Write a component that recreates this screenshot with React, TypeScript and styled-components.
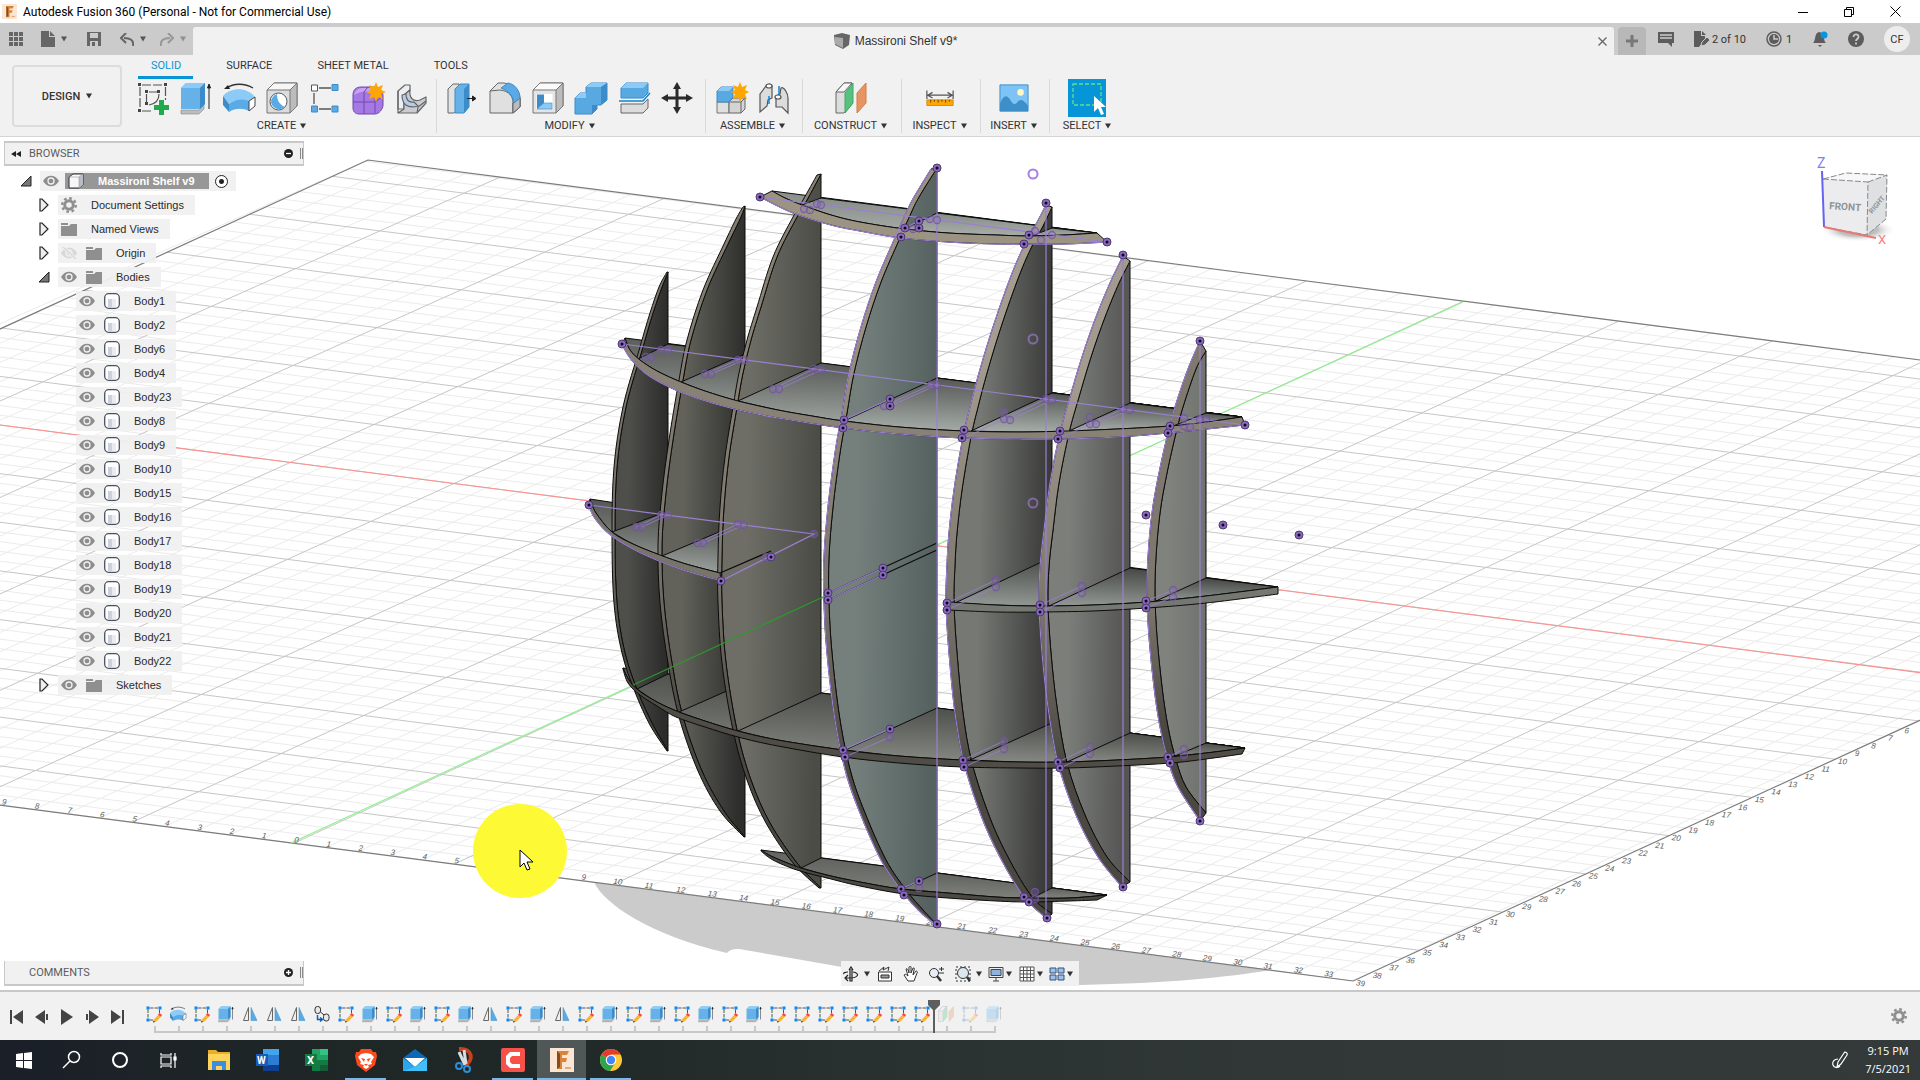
import React from "react";
import styled, { createGlobalStyle } from "styled-components";

const ui = 'Roboto, "Liberation Sans", sans-serif';
const arial = '"Liberation Sans", Arial, sans-serif';
const segoe = '"Open Sans", "Noto Sans", sans-serif';

const GlobalStyle = createGlobalStyle`
  * { box-sizing: border-box; }
  body { margin: 0; font-family: ${ui}; font-size: 11px; color: #333; overflow: hidden; }
  button { border: 0; padding: 0; margin: 0; background: none; font: inherit; color: inherit; cursor: pointer; }
  svg { display: block; flex: none; }
  ul, ol { list-style: none; margin: 0; padding: 0; }
`;

const Page = styled.div`
  display: flex;
  flex-direction: column;
  height: 100vh;
  background: #fff;
`;

/* ---------- window title ---------- */
const TitleBar = styled.header`
  display: flex;
  align-items: center;
  height: 23px;
  padding: 0 2px;
  font: 12px/20px ${ui};
  color: #000;
`;
const TitleText = styled.span`
  flex: 1;
  padding-left: 6px;
`;
const WindowButton = styled.button`
  display: flex;
  justify-content: center;
  align-items: center;
  width: 46px;
  height: 20px;
`;

/* ---------- application bar ---------- */
const AppBar = styled.div`
  display: flex;
  align-items: flex-end;
  height: 32px;
  background: #cbcbcb;
  color: #333;
`;
const QuickAccess = styled.div`
  display: flex;
  align-items: center;
  width: 193px;
  height: 32px;
  padding-left: 6px;
`;
const QuickButton = styled.button<{ $w: number; $faded?: boolean }>`
  display: flex;
  align-items: center;
  justify-content: center;
  gap: 6px;
  width: ${(p) => p.$w}px;
  height: 28px;
  opacity: ${(p) => (p.$faded ? 0.5 : 1)};
`;
const DocumentTab = styled.div`
  display: flex;
  align-items: center;
  flex: 1;
  height: 28px;
  padding-right: 4px;
  background: #f1f1f1;
  border-radius: 3px 3px 0 0;
  font: 12px/16px ${arial};
`;
const DocumentName = styled.div`
  display: flex;
  flex: 1;
  align-items: center;
  justify-content: center;
  gap: 4px;
  padding-left: 4px;
`;
const SmallButton = styled.button`
  display: flex;
  align-items: center;
  justify-content: center;
  width: 16px;
  height: 16px;
`;
const NewTab = styled.button`
  display: flex;
  align-items: center;
  justify-content: center;
  width: 28px;
  height: 28px;
  margin: 0 4px;
  background: #b8b8b8;
  border-radius: 4px 4px 0 0;
`;
const StatusArea = styled.div`
  display: flex;
  align-items: center;
  width: 270px;
  height: 32px;
  padding: 0 10px 0 8px;
  justify-content: space-between;
`;
const StatusButton = styled.button<{ $gap?: number }>`
  display: flex;
  align-items: center;
  gap: ${(p) => p.$gap ?? 4}px;
`;
const Avatar = styled.button`
  width: 26px;
  height: 26px;
  border-radius: 50%;
  background: #ededed;
`;

/* ---------- ribbon ---------- */
const Ribbon = styled.div`
  display: flex;
  height: 82px;
  background: #f1f1f1;
  border-bottom: 1px solid #d4d4d4;
`;
const Workspace = styled.button`
  display: flex;
  align-items: center;
  justify-content: center;
  gap: 6px;
  width: 110px;
  height: 62px;
  margin: 10px 8px 0 12px;
  border: 2px solid #dcdcdc;
  border-radius: 4px;
  font-weight: 500;
`;
const RibbonBody = styled.div`
  display: flex;
  flex-direction: column;
`;
const TabStrip = styled.nav`
  display: flex;
  gap: 20px;
  padding-left: 8px;
`;
const RibbonTab = styled.button<{ $active?: boolean }>`
  height: 24px;
  padding: 1px 12px 0 13px;
  line-height: 20px;
  color: ${(p) => (p.$active ? "#0696d7" : "#333")};
  border-bottom: 3px solid ${(p) => (p.$active ? "#0696d7" : "transparent")};
`;
const GroupRow = styled.div`
  display: flex;
`;
const Group = styled.section<{ $w: number }>`
  display: flex;
  flex-direction: column;
  align-items: center;
  width: ${(p) => p.$w}px;
  height: 54px;
  padding-right: 3px;
  border-right: 1px solid #d9d9d9;
  &:last-child { border-right: 0; }
`;
const Tools = styled.div`
  display: flex;
  gap: 11px;
  height: 41px;
`;
const Tool = styled.button<{ $selected?: boolean }>`
  display: flex;
  align-items: center;
  justify-content: center;
  width: ${(p) => (p.$selected ? 38 : 32)}px;
  height: 38px;
  background: ${(p) => (p.$selected ? "#0696d7" : "none")};
`;
const GroupLabel = styled.button`
  display: flex;
  align-items: center;
  gap: 4px;
  line-height: 14px;
  white-space: nowrap;
`;

/* ---------- canvas ---------- */
const Canvas = styled.main`
  position: relative;
  flex: 1;
  min-height: 0;
  overflow: hidden;
  background: #fff;
`;
const Scene = styled.svg`
  width: 100%;
  height: 100%;
`;
const BrowserPanel = styled.aside`
  position: absolute;
  left: 4px;
  top: 4px;
  width: 300px;
`;
const PanelBar = styled.div<{ $open?: boolean }>`
  display: flex;
  align-items: center;
  height: 25px;
  padding: 0 0 0 6px;
  background: #f1f1f1;
  border: 1px solid #c8c8c8;
  border-width: ${(p) => (p.$open ? "2px 1px 2px 1px" : "0 1px 2px 1px")};
  color: #5c5c5c;
`;
const PanelTitle = styled.span`
  flex: 1;
  padding-left: 8px;
`;
const Grip = styled.span`
  width: 3px;
  height: 11px;
  margin-left: 4px;
  border: solid #888;
  border-width: 0 1px;
`;
const CommentsPanel = styled.aside`
  position: absolute;
  left: 4px;
  bottom: 4px;
  width: 300px;
`;
const Tree = styled.ul`
  display: flex;
  flex-direction: column;
  gap: 4px;
  padding-top: 5px;
  font: 11px/20px ${arial};
  color: #2b2b2b;
`;
const TreeRow = styled.li<{ $depth: number }>`
  display: flex;
  align-items: center;
  height: 20px;
  padding-left: ${(p) => p.$depth * 18 + 14}px;
`;
const Twisty = styled.button`
  display: flex;
  align-items: center;
  justify-content: center;
  width: 16px;
  height: 20px;
  margin-right: 6px;
`;
const TwistySpace = styled.span`
  width: 22px;
`;
const RowCard = styled.div`
  display: flex;
  align-items: center;
  height: 20px;
  padding: 0 11px 0 3px;
  gap: 9px;
  background: rgba(240, 240, 240, 0.94);
`;
const RowName = styled.span`
  padding-left: 5px;
  white-space: nowrap;
`;
const RootCard = styled(RowCard)`
  padding-right: 8px;
  gap: 6px;
`;
const RootName = styled.span`
  display: flex;
  align-items: center;
  gap: 14px;
  height: 16px;
  padding: 0 14px 0 3px;
  background: #979797;
  color: #fff;
  font-weight: 700;
  white-space: nowrap;
`;
const RootRadio = styled.input`
  appearance: none;
  width: 13px;
  height: 13px;
  margin: 0;
  border: 1px solid #222;
  border-radius: 50%;
  background: radial-gradient(circle, #222 0 2px, #fff 3px);
`;
const NavBar = styled.div`
  position: absolute;
  left: 50%;
  bottom: 4px;
  display: flex;
  align-items: center;
  width: 238px;
  height: 25px;
  margin-left: -119px;
  padding: 0 2px;
  background: #f1f1f1;
`;
const NavButton = styled.button<{ $w: number; $gap?: number }>`
  display: flex;
  align-items: center;
  gap: ${(p) => p.$gap ?? 2}px;
  width: ${(p) => p.$w}px;
`;

/* ---------- timeline ---------- */
const Timeline = styled.footer`
  display: flex;
  align-items: flex-start;
  height: 50px;
  padding: 12px 13px 0 4px;
  background: #f1f1f1;
  border-top: 2px solid #c8c8c8;
`;
const PlayControls = styled.div`
  display: flex;
  width: 138px;
  padding-top: 1px;
`;
const PlayButton = styled.button`
  display: flex;
  align-items: center;
  justify-content: center;
  width: 25px;
  height: 24px;
`;
const Features = styled.ol`
  display: flex;
  flex: 1;
`;
const Feature = styled.li<{ $edge?: "first" | "last"; $faded?: boolean }>`
  position: relative;
  display: flex;
  justify-content: center;
  width: 24px;
  height: 29px;
  > button { opacity: ${(p) => (p.$faded ? 0.3 : 1)}; height: 20px; }
  &::before {
    content: "";
    position: absolute;
    bottom: 0;
    left: ${(p) => (p.$edge === "first" ? 12 : 0)}px;
    right: ${(p) => (p.$edge === "last" ? 10 : 0)}px;
    height: 2px;
    background: #c8c8c8;
  }
  &::after {
    content: "";
    position: absolute;
    bottom: 0;
    left: 12px;
    width: 2px;
    height: 7px;
    background: #c8c8c8;
  }
`;
const Marker = styled.span`
  position: absolute;
  left: -6px;
  top: -4px;
  z-index: 1;
`;
const SettingsButton = styled.button`
  padding-top: 4px;
`;

/* ---------- taskbar ---------- */
const Taskbar = styled.footer`
  display: flex;
  align-items: stretch;
  height: 40px;
  background: linear-gradient(90deg, #1a1f28 0, #1e2527 12%, #1f2826 26%, #283030 45%, #313737 65%, #343939 100%);
  color: #fff;
`;
const SystemKeys = styled.div`
  display: flex;
  width: 194px;
`;
const TaskButton = styled.button<{ $w: number; $state?: "open" | "active" }>`
  position: relative;
  display: flex;
  align-items: center;
  justify-content: center;
  width: ${(p) => p.$w}px;
  background: ${(p) => (p.$state === "active" ? "#515756" : "none")};
  &::after {
    content: "";
    position: absolute;
    bottom: 0;
    left: ${(p) => (p.$state === "active" ? 0 : 4)}px;
    right: ${(p) => (p.$state === "active" ? 0 : 4)}px;
    height: 2px;
    background: ${(p) => (p.$state ? "#76b9ed" : "transparent")};
  }
`;
const Tray = styled.div`
  display: flex;
  align-items: center;
  gap: 17px;
  margin-left: auto;
  padding-right: 9px;
`;
const Clock = styled.div`
  font: 11px/18px ${segoe};
  text-align: center;
`;

/* ================= icons ================= */
const Caret = ({ c = "#333" }: { c?: string }) => (
  <svg width="6" height="6" viewBox="0 0 6 6"><path d="M0 .5h6L3 5.5z" fill={c} /></svg>
);

const toolIcons: Record<string, React.ReactNode> = {
  sketch: (
    <g fill="none" stroke="#555" strokeWidth="1.2">
      <path d="M3 5v22M5 3h21M28.500 5v13M5 29h11" strokeDasharray="9 2" />
      <path d="M9.500 12v8M12 10h8M22 12c0 6-4 10-10 11" />
      <path d="M1 1h3v3H1zM27 1h3v3h-3zM1 27h3v3H1zM8 8h3v3H8zM20 8h3v3h-3zM8 20h3v3H8z" fill="#444" stroke="none" />
      <path d="M22 18h5v5h5v5h-5v5h-5v-5h-5v-5h5z" fill="#1faa4e" stroke="none" />
    </g>
  ),
  extrude: (
    <g>
      <path d="M1 28h18l5-5v4l-5 5H1z" fill="#bdbdbd" stroke="#888" strokeWidth=".6" />
      <path d="M1 6l5-5h19v21l-5 5H1z" fill="#66b2e8" />
      <path d="M1 6l5-5h19l-5 5z" fill="#8ccbf7" /><path d="M20 6l5-5v21l-5 5z" fill="#3b8cc9" />
      <path d="M29 27V3M27.500 6L29 2l1.500 4z" stroke="#222" fill="#222" />
    </g>
  ),
  revolve: (
    <g>
      <path d="M4 6C10 1 22 1 30 6" fill="none" stroke="#333" strokeWidth="1.300" /><path d="M1 7l4-4 2 4z" fill="#222" />
      <path d="M0 14C8 5 24 5 32 15l-6 4C20 16 12 17 6 22z" fill="#8ccbf7" />
      <path d="M0 14l6 8v8l-6-7z" fill="#3b8cc9" /><path d="M6 22c6-5 14-6 20-3v10c-6-3-14-3-20 1z" fill="#5aaae6" />
      <path d="M26 19l6-4v9l-6 5z" fill="#fff" stroke="#444" />
    </g>
  ),
  hole: (
    <g stroke="#777" strokeWidth="1">
      <path d="M1 8l7-7h23v23l-7 7H1z" fill="#dcdcdc" /><path d="M1 8l7-7h23l-7 7z" fill="#f6f6f6" /><path d="M24 8l7-7v23l-7 7z" fill="#bcbcbc" />
      <circle cx="12.500" cy="19.500" r="8.500" fill="#fff" stroke="#555" /><path d="M11 12c-7 3-8 10-2 14 3 2 8 1 10-1-5-2-8-6-8-13z" fill="#5aaae6" stroke="none" />
    </g>
  ),
  pattern: (
    <g>
      <path d="M10 6h12M5 11v11M10 27h12" stroke="#555" strokeWidth="1.300" /><path d="M2.500 3h6v6h-6z" fill="#fff" stroke="#555" />
      <path d="M23 2.500h6v6h-6zM2.500 24h6v6h-6zM23 24h6v6h-6z" fill="#5aaae6" stroke="#3d8cc8" />
    </g>
  ),
  form: (
    <g>
      <path d="M1 13c0-5 3-8 8-8h14c5 1 8 4 8 9v9c0 4-4 9-8 9H7c-4 0-6-3-6-6z" fill="#a678e4" stroke="#6f49ad" />
      <path d="M2 13c1-4 4-7 8-7h12l-2 4c-6-1-12-1-18 3z" fill="#c9a2f2" />
      <path d="M1 20h22l7-5M12 10v22M12 10l4-5M23 11v20" fill="none" stroke="#6f49ad" />
      <path d="M24 0l2 5 5-2-2 5 5 2-5 2 2 5-5-2-2 5-2-5-5 2 2-5-5-2 5-2-2-5 5 2z" fill="#ffa600" />
    </g>
  ),
  derive: (
    <g stroke="#666" strokeWidth="1.200" strokeLinejoin="round">
      <path d="M3 9l7-6h5v5l-6 5v14H3z" fill="#eceef1" />
      <path d="M9 13l6-5c-1 8 3 12 10 10l6-3v6l-9 10H3l6-4z" fill="#c9cdd3" />
      <path d="M7 13c0 9 5 14 16 11l-4-4c-6 1-8-3-8-8z" fill="#b4cdea" />
      <path d="M3 31V9M22 31l1-6 8-6" fill="none" />
    </g>
  ),
  presspull: (
    <g stroke="#666">
      <path d="M2 7l5-5h6v24l-5 5H2z" fill="#e2e2e2" /><path d="M9 7l5-5h9v23l-5 6H9z" fill="#66b2e8" stroke="#3d8cc8" /><path d="M18 7l5-5v23l-5 6z" fill="#3b8cc9" stroke="none" />
      <path d="M21 16.500h6M26.500 14l3.500 2.500-3.500 2.500z" stroke="#222" fill="#222" />
    </g>
  ),
  fillet: (
    <g stroke="#666">
      <path d="M1 31V9l8-8h6c10 2 16 8 16 16v8l-7 6z" fill="#e0e0e0" /><path d="M24 31V21c0-7-4-12-13-13l-10 1M24 31l7-6V16l-7 5z" fill="none" />
      <path d="M24 31V21l7-5v9z" fill="#bcbcbc" />
      <path d="M19 1c7 1 12 8 12 15l-6 5c-1-7-5-12-13-15z" fill="#5aaae6" stroke="#3d8cc8" />
    </g>
  ),
  shell: (
    <g stroke="#777">
      <path d="M1 8l7-7h23v23l-7 7H1z" fill="#e4e4e4" /><path d="M1 8l7-7h23l-7 7z" fill="#fafafa" /><path d="M24 8l7-7v23l-7 7z" fill="#bcbcbc" />
      <path d="M4.500 12h16v15h-16z" fill="#fff" stroke="none" /><path d="M5 12.500h7V21l-7 6z" fill="#3d8cc8" stroke="none" /><path d="M12 21h8v6H5z" fill="#8ccbf7" stroke="#3d8cc8" strokeWidth=".6" />
    </g>
  ),
  combine: (
    <g>
      <path d="M0 16l5-5h6V5l5-4h16v17l-6 5h-4v4l-5 5H0z" fill="#58a8e2" stroke="#3d8cc8" />
      <path d="M0 16l5-5h6v5zM11 5l5-4h16l-6 4z" fill="#8ccbf7" /><path d="M26 5l6-4v17l-6 5zM17 23h5v4l-5 5z" fill="#3b8cc9" />
    </g>
  ),
  split: (
    <g>
      <path d="M3 6l5-5h22v10l-5 5H3z" fill="#58a8e2" stroke="#3d8cc8" /><path d="M3 6l5-5h22l-5 5z" fill="#8ccbf7" />
      <path d="M1 19h24l7-8" stroke="#0d87d8" strokeWidth="1.500" fill="none" /><path d="M3 22h22l5-5v9l-5 5H3z" fill="#dcdcdc" stroke="#666" />
    </g>
  ),
  move: <path d="M16 0l4 7h-2.500v7.500H25V12l7 4-7 4v-2.500h-7.500V25H20l-4 7-4-7h2.500v-7.500H7V20l-7-4 7-4v2.500h7.500V7H12z" fill="#2b2b2b" />,
  component: (
    <g>
      <path d="M2 20h12v11H2z" fill="#e0e0e0" stroke="#777" /><path d="M14 20l4-4h12v11l-4 4H14z" fill="#d4d4d4" stroke="#666" /><path d="M14 20h12v11M26 20l4-4" stroke="#666" fill="none" />
      <path d="M2 9l4-4h12v10l-4 5H2z" fill="#58a8e2" stroke="#3d8cc8" /><path d="M2 9l4-4h12l-4 4z" fill="#8ccbf7" />
      <path d="M25 0l2 5 5-2-2 5 4 2-4 2 2 5-5-2-2 5-2-5-5 2 2-5-4-2 4-2-2-5 5 2z" fill="#ffa600" />
    </g>
  ),
  joint: (
    <g stroke="#555" strokeWidth="1.200">
      <path d="M2 12l6-8c2-3 6-2 6 0v12l-4 2-1 6-7 6z" fill="#dcdcdc" /><path d="M30 31l-6-6h-6V14l4-2 1-6c3-2 7 6 7 10z" fill="#dcdcdc" />
      <path d="M11 14v8M21 4v9" stroke="#0d87d8" strokeWidth="1.500" /><ellipse cx="11" cy="4" rx="3" ry="2" fill="#fff" /><ellipse cx="20" cy="15" rx="3" ry="2" fill="#fff" />
    </g>
  ),
  plane: (
    <g>
      <path d="M1 10l8-9h8v21l-8 9H1z" fill="#ddd" stroke="#666" /><path d="M1 10l8-9h8l-8 9z" fill="#f8f8f8" stroke="#666" /><path d="M10 11l8-10v20l-8 10z" fill="#57c27d" stroke="#42a566" />
      <path d="M22 11l9-10v20l-9 10z" fill="#e69560" stroke="#cf7d48" />
    </g>
  ),
  measure: (
    <g>
      <path d="M2 8v9M30 8v9M4 13h24M8 10l-5 3 5 3M24 10l5 3-5 3" stroke="#555" fill="none" strokeWidth="1.300" />
      <path d="M2 18h28v6H2z" fill="#ffa600" stroke="#d48a00" /><path d="M6 18v3M10 18v2M14 18v3M18 18v2M22 18v3M26 18v2" stroke="#664400" />
    </g>
  ),
  image: (
    <g><path d="M1 2h30v28H1z" fill="#7ec3f5" stroke="#3c8fc9" /><path d="M1 22c4-9 7-10 11-4 3 5 5 6 9 1 4-3 7 2 10 5v6H1z" fill="#3c8fc9" /><circle cx="23" cy="10" r="3.500" fill="#fdf9c8" /></g>
  ),
  select: (
    <g><path d="M2 2h28v21H2z" fill="none" stroke="#62e08a" strokeWidth="1.300" strokeDasharray="4 2" /><path d="M23 14v16l4-4 3 7 3-1-3-7h5z" fill="#fff" /></g>
  ),
  mirror: (<g stroke="#666"><path d="M13 3v26H3z" fill="#eee" strokeWidth="2" /><path d="M18 3l12 26H18z" fill="#5aaae6" stroke="#3d8cc8" /></g>),
  tlsketch: (
    <g>
      <path d="M4 7v18M8 4h16M27 7v8M7 28h8" stroke="#555" strokeWidth="2" strokeDasharray="7 2" fill="none" />
      <path d="M1 1h6v6H1zM25 1h6v6h-6zM1 25h6v6H1z" fill="#0d87e8" /><path d="M27 15l5 4-11 12-7 2 2-6z" fill="#f7b13c" /><path d="M27 14l5 4-3 3-5-4z" fill="#f0434a" /><path d="M14 33l1-4 3 3z" fill="#333" />
    </g>
  ),
  rigid: (
    <g stroke="#333" strokeWidth="2"><rect x="2" y="1" width="11" height="14" rx="5" fill="#e8e8e8" /><rect x="19" y="16" width="11" height="14" rx="5" fill="#e8e8e8" /><path d="M13 12l7 6" /><path d="M7 18v9h8M12 23l5 4-5 4" stroke="#0d5fb8" fill="none" strokeWidth="3" /></g>
  ),
};
const ToolIcon = ({ name, size = 32 }: { name: string; size?: number }) => (
  <svg width={size} height={size} viewBox="0 0 32 32" overflow="visible">{toolIcons[name]}</svg>
);

const Eye = ({ off }: { off?: boolean }) => (
  <svg width="16" height="12" viewBox="0 0 16 12" opacity={off ? 0.25 : 1}>
    <path d="M0 6c4-7 12-7 16 0-4 7-12 7-16 0z" fill="#8d8d8d" />
    <circle cx="8" cy="6" r="3" fill="none" stroke="#f1f1f1" strokeWidth="1.300" />
    {off && <path d="M2 0l13 12" stroke="#f1f1f1" strokeWidth="3" />}
    {off && <path d="M2 0l13 12" stroke="#8d8d8d" strokeWidth="1.300" />}
  </svg>
);
const Folder = () => (
  <svg width="16" height="14" viewBox="0 0 16 14"><path d="M0 1h7v2H0zM0 4h8l2-2h6v12H0z" fill="#8f8f8f" /></svg>
);
const BodyIcon = () => (
  <svg width="16" height="16" viewBox="0 0 16 16"><rect x=".7" y=".7" width="14.600" height="14.600" rx="4" fill="#fff" stroke="#4a5060" strokeWidth="1.300" /><path d="M4 6h4v8H4z" fill="#cdd1da" /><path d="M8 6h4v8H8z" fill="#e9ebf0" /></svg>
);
const CubeIcon = () => (
  <svg width="16" height="16" viewBox="0 0 16 16"><path d="M1 4l4-3h10v11l-4 3H1z" fill="#f5f6f8" stroke="#333" /><path d="M11 4l4-3v11l-4 3z" fill="#b7bcc6" /><path d="M1 4h10v11M11 4l4-3" fill="none" stroke="#999" strokeWidth=".6" /></svg>
);
const Gear = ({ size = 16 }: { size?: number }) => (
  <svg width={size} height={size} viewBox="0 0 16 16"><circle cx="8" cy="8" r="4.300" fill="none" stroke="#8f8f8f" strokeWidth="3" /><circle cx="8" cy="8" r="6.800" fill="none" stroke="#8f8f8f" strokeWidth="2.400" strokeDasharray="2.700 2.640" /></svg>
);
const Arrow = ({ open }: { open?: boolean }) => (
  <svg width="12" height="14" viewBox="0 0 12 14">
    {open ? <path d="M11 2v10H1z" fill="#777" stroke="#222" /> : <path d="M2 1v12h2l6-6-6-6z" fill="#eee" stroke="#222" strokeWidth="1.200" />}
  </svg>
);
const RoundSign = ({ plus }: { plus?: boolean }) => (
  <svg width="9" height="9" viewBox="0 0 9 9"><circle cx="4.500" cy="4.500" r="4.500" fill="#222" /><path d={plus ? "M2 4.500h5M4.500 2v5" : "M2 4.500h5"} stroke="#fff" strokeWidth="1.300" /></svg>
);

/* ================= model ================= */
type P = [number, number];

/** Catmull-Rom curve through the points, without the opening move. */
function curve(p: P[]): string {
  let d = "";
  for (let i = 0; i < p.length - 1; i++) {
    const a = p[i - 1] ?? p[i], b = p[i], c = p[i + 1], e = p[i + 2] ?? c;
    const f = (n: number) => n.toFixed(1);
    d += `C${f(b[0] + (c[0] - a[0]) / 6)} ${f(b[1] + (c[1] - a[1]) / 6)} ${f(c[0] - (e[0] - b[0]) / 6)} ${f(c[1] - (e[1] - b[1]) / 6)} ${c[0]} ${c[1]}`;
  }
  return d;
}
const at = (p: P) => `${p[0]} ${p[1]}`;
const rev = (p: P[]) => [...p].reverse();

interface Rib { edge: P[]; top: P; bottom: P; t: number; from: string; to: string; front: string; sketched?: boolean }
const ribs: Rib[] = [
  { edge: [[667, 272], [659, 287], [650, 313], [640, 347], [623, 407], [614, 467], [612, 533], [614, 603], [622, 653], [635, 692], [650, 725], [667, 751]], top: [668, 272], bottom: [668, 751], t: 3, from: "#4e4e4a", to: "#2c2c2b", front: "#7a7568" },
  { edge: [[743, 207], [736, 219], [724, 244], [703, 290], [687, 340], [679, 380], [669, 440], [662, 493], [658, 545], [660, 603], [668, 663], [679, 717], [698, 771], [720, 811], [744, 837]], top: [745, 206], bottom: [745, 837], t: 4, from: "#62625b", to: "#2e2e2c", front: "#837d70" },
  { edge: [[817, 175], [803, 200], [793, 217], [773, 257], [757, 307], [747, 340], [739, 373], [733, 407], [725, 457], [720, 507], [718, 557], [718, 603], [722, 663], [733, 730], [747, 780], [766, 823], [793, 863], [819, 888]], top: [821, 174], bottom: [821, 888], t: 4, from: "#6e6e67", to: "#4c4c47", front: "#8a8375" },
  { edge: [[931, 169], [914, 197], [906, 213], [894, 240], [876, 282], [861, 327], [849, 373], [842, 413], [835, 453], [828, 507], [824, 557], [824, 603], [827, 653], [835, 720], [846, 773], [860, 813], [881, 860], [901, 890], [919, 911], [936, 925]], top: [937, 168], bottom: [937, 925], t: 5, from: "#75807d", to: "#55625f", front: "#9a9182", sketched: true },
  { edge: [[1046, 205], [1035, 226], [1024, 246], [1011, 276], [993, 327], [979, 373], [970, 407], [963, 437], [954, 490], [949, 533], [947, 565], [946, 603], [949, 653], [955, 713], [964, 763], [982, 818], [1001, 859], [1024, 897], [1046, 918]], top: [1052, 207], bottom: [1052, 914], t: 8, from: "#767873", to: "#3a3b3a", front: "#a59d8f", sketched: true },
  { edge: [[1123, 256], [1110, 283], [1096, 317], [1082, 357], [1070, 397], [1060, 433], [1050, 483], [1044, 530], [1040, 567], [1039, 603], [1042, 653], [1048, 707], [1058, 763], [1076, 815], [1098, 857], [1122, 887]], top: [1130, 261], bottom: [1130, 882], t: 9, from: "#7c7e7a", to: "#545554", front: "#a39b8e", sketched: true },
  { edge: [[1200, 341], [1188, 369], [1175, 407], [1168, 433], [1159, 473], [1152, 513], [1148, 557], [1147, 595], [1149, 637], [1154, 687], [1160, 727], [1168, 760], [1178, 787], [1200, 821]], top: [1206, 351], bottom: [1206, 813], t: 8, from: "#80827d", to: "#70736f", front: "#7f786d", sketched: true },
];

interface Shelf { upper: P[]; lower: P[]; end: P; cuts: Record<number, [P, P]>; front: string; glow: string; deep: string; sketched?: boolean; open?: boolean }
const shelves: Shelf[] = [
  { upper: [[772, 191], [785, 198], [802, 205], [831, 215], [860, 222], [905, 229], [948, 233], [996, 235], [1029, 236], [1064, 235], [1097, 233]], lower: [[760, 197], [793, 213], [831, 225], [860, 231], [901, 238], [948, 242], [996, 244], [1024, 244], [1064, 244], [1107, 242]], end: [1097, 233],
    cuts: { 2: [[802, 205], [821, 198]], 3: [[905, 229], [937, 213]], 4: [[1032, 236], [1052, 228]] }, front: "#9c9483", glow: "#a9aeaa", deep: "#868c88", sketched: true },
  { upper: [[625, 338], [630, 350], [640, 360], [657, 371], [681, 382], [705, 391], [738, 401], [778, 410], [812, 416], [844, 421], [899, 427], [964, 431], [1020, 432], [1067, 431], [1117, 429], [1170, 426], [1206, 422], [1242, 417]], lower: [[622, 344], [630, 358], [645, 373], [667, 386], [696, 398], [734, 409], [778, 418], [843, 428], [899, 434], [962, 438], [1020, 439], [1058, 439], [1117, 437], [1168, 433], [1245, 425]], end: [1242, 417],
    cuts: { 0: [[638, 359], [668, 344]], 1: [[681, 382], [745, 354]], 2: [[738, 401], [821, 363]], 3: [[844, 421], [937, 378]], 4: [[971, 431], [1052, 393]], 5: [[1069, 431], [1130, 403]], 6: [[1173, 426], [1206, 413]] }, front: "#888276", glow: "#a2a9a5", deep: "#565854", sketched: true },
  { upper: [[590, 499], [596, 513], [612, 532], [633, 544], [660, 555], [686, 564], [720, 573]], lower: [[589, 505], [594, 517], [608, 533], [633, 549], [659, 561], [686, 571], [721, 581]], end: [800, 531],
    cuts: { 0: [[612, 532], [668, 511]], 1: [[662, 556], [745, 521]] }, front: "#77746a", glow: "#999f9b", deep: "#50524e", sketched: true },
  { upper: [[950, 602], [996, 605], [1041, 606], [1093, 605], [1147, 602], [1206, 596], [1278, 587]], lower: [[947, 610], [996, 612], [1041, 612], [1093, 611], [1147, 608], [1206, 603], [1278, 594]], end: [1278, 587],
    cuts: { 4: [[955, 603], [1052, 557]], 5: [[1049, 606], [1130, 568]], 6: [[1156, 601], [1206, 578]] }, front: "#757771", glow: "#8d938f", deep: "#484a47", open: true },
  { upper: [[623, 668], [629, 680], [638, 690], [657, 702], [679, 712], [705, 721], [738, 731], [778, 740], [843, 750], [899, 756], [962, 760], [1020, 762], [1066, 762], [1117, 760], [1168, 757], [1206, 753], [1245, 748]], lower: [[623, 669], [628, 683], [640, 695], [657, 706], [676, 717], [705, 727], [738, 737], [778, 746], [843, 757], [899, 763], [962, 767], [1020, 768], [1066, 768], [1117, 766], [1171, 763], [1206, 759], [1242, 754]], end: [1245, 748],
    cuts: { 0: [[637, 689], [668, 674]], 1: [[679, 712], [745, 683]], 2: [[738, 731], [821, 693]], 3: [[845, 750], [937, 708]], 4: [[970, 760], [1052, 723]], 5: [[1067, 762], [1130, 733]], 6: [[1175, 756], [1206, 743]] }, front: "#504d46", glow: "#838580", deep: "#4e504c" },
  { upper: [[761, 850], [773, 857], [801, 868], [831, 876], [860, 882], [901, 889], [948, 893], [996, 897], [1025, 898], [1069, 898], [1107, 895]], lower: [[761, 851], [773, 860], [797, 870], [831, 879], [860, 886], [904, 894], [948, 898], [996, 901], [1029, 902], [1069, 901], [1097, 900]], end: [1107, 895],
    cuts: { 2: [[801, 868], [821, 858]], 3: [[902, 889], [937, 873]], 4: [[1032, 898], [1052, 888]] }, front: "#4c4942", glow: "#80827c", deep: "#60625e" },
];

const RibShape = ({ rib, i }: { rib: Rib; i: number }) => {
  const inner: P[] = [rib.top, ...rib.edge.slice(1, -1).map(([x, y]): P => [Math.min(x + rib.t, rib.top[0]), y]), rib.bottom];
  return (
    <g stroke="#0b0b0b" strokeWidth="1" strokeLinejoin="round">
      <path d={`M${at(rib.top)}${curve(inner)}Z`} fill={`url(#rib${i})`} />
      <path d={`M${at(rib.edge[0])}${curve(rib.edge)}L${at(rib.bottom)}${curve(rev(inner))}Z`} fill={`url(#front${i})`} />
    </g>
  );
};
const ShelfPiece = ({ s, n, cut }: { s: Shelf; n: number; cut?: [P, P] }) => {
  const start = cut ? cut[0] : s.upper[0];
  const pts: P[] = [...rev(s.upper.filter((p) => p[0] > start[0] + 2)), start];
  return (
    <path d={`M${at(start)}${cut ? "L" + at(cut[1]) : ""}L${at(s.end)}L${at(pts[0])}${curve(pts)}Z`} fill={`url(#shelf${n})`} stroke="#0b0b0b" strokeWidth="1" />
  );
};

const solid: P[] = [[760,197],[937,168],[1046,203],[1107,242],[1024,244],[1029,235],[905,228],[901,237],[919,228],[919,221],[1123,255],[1200,341],[622,344],[1245,425],[844,420],[843,428],[890,399],[890,406],[964,430],[962,438],[1060,431],[1058,439],[1170,426],[1168,433],[589,505],[721,581],[771,557],[1146,515],[1223,525],[1299,535],[828,593],[828,600],[883,568],[883,575],[947,603],[947,610],[1040,605],[1040,612],[1146,601],[1146,608],[843,750],[845,757],[890,729],[963,760],[964,767],[1058,762],[1060,768],[1168,757],[1170,763],[901,889],[904,895],[919,881],[1024,897],[1029,902],[937,924],[1047,918],[1123,887],[1200,821]];
const faint: P[] = [[661,350],[668,350],[646,357],[651,357],[738,360],[744,360],[705,374],[711,374],[814,369],[821,370],[773,389],[779,389],[931,385],[937,385],[884,406],[1004,412],[1004,419],[1010,420],[1046,399],[1052,400],[1090,417],[1090,424],[1096,424],[1123,409],[1130,410],[1184,418],[1184,426],[1190,427],[1200,419],[1206,419],[661,515],[668,515],[636,527],[642,527],[738,524],[744,525],[698,543],[703,543],[814,534],[766,557],[817,204],[821,205],[804,209],[810,210],[930,219],[937,220],[913,229],[1035,231],[1052,235],[1041,240],[996,580],[996,587],[1082,586],[1082,593],[1173,590],[1173,597],[890,737],[1004,741],[1004,749],[1090,747],[1090,754],[1184,749],[1184,755],[919,888],[1035,892],[1035,899]];

const steps = (a: number, b: number) => Array.from({ length: b - a + 1 }, (_, k) => a + k);
const frontLine = (x: number) => 805 + x * 0.13;
const backLine = (x: number) => 112.600 + x * 0.129;

const Ground = () => (
  <g fill="none">
    {[false, true].map((major) => (
      <g key={String(major)} stroke={major ? "#c6c6c6" : "#ebebeb"} strokeWidth="1">
        {steps(-34, 34).filter((i) => (i % 5 === 0) === major).map((i) => {
          const x1 = 294 + 32.2 * i - 0.03 * i * i, x2 = 1463 + 31.2 * i - 0.03 * i * i;
          return <path key={`v${i}`} d={`M${x1} ${frontLine(x1)}L${x2} ${backLine(x2)}`} />;
        })}
        {steps(-32, 39).filter((j) => (j % 5 === 0) === major).map((j) => (
          <path key={`u${j}`} d={`M${-163 - 16.5 * j} ${404 + 7.59 * j}L${2001 - 16.62 * j} ${682.6 + 7.65 * j}`} />
        ))}
      </g>
    ))}
    <path d="M-808 700L368 160L2533 439M-808 700L1353 981L2001 683" stroke="#7b7b7b" strokeWidth="1.200" />
    <path d="M-163 404L2001 683" stroke="#ff8f8f" strokeWidth="1.200" />
    <path d="M291 843L1463 302" stroke="#8df28d" strokeWidth="1.200" />
    <g fill="#5e5e5e" fontFamily={arial} fontSize="8" fontStyle="italic">
      {steps(-9, 33).map((i) => {
        const x = 294 + 32.2 * i - 0.03 * i * i;
        return <text key={i} transform={`translate(${x} ${frontLine(x) - 1}) rotate(7)`}>{Math.abs(i)}</text>;
      })}
      {steps(6, 39).map((j) => (
        <text key={j} transform={`translate(${2004 - 16.62 * j} ${687 + 7.65 * j}) rotate(7)`}>{j}</text>
      ))}
    </g>
  </g>
);

const ViewCube = () => (
  <g>
    <ellipse cx="1858" cy="230" rx="38" ry="12" fill="url(#cubeShadow)" />
    <path d="M1823 179L1868 182L1867 235L1824 227Z" fill="#ececee" />
    <path d="M1868 182L1887 175L1886 219L1867 235Z" fill="#dfe0e2" />
    <path d="M1823 179L1846 173L1887 175L1868 182Z" fill="#f7f7f8" />
    <path d="M1823 179L1868 182L1867 235L1824 227M1868 182L1887 175L1886 219L1867 235M1823 179L1846 173L1887 175" fill="none" stroke="#888" strokeWidth="1" strokeDasharray="6 2" />
    <path d="M1822 171L1824 227" stroke="#6464ee" strokeWidth="2" />
    <path d="M1824 227L1876 238" stroke="#e87878" strokeWidth="2" />
    <g fontFamily={ui}>
      <text x="1817" y="168" fontSize="14" fill="#8080f5">Z</text>
      <text x="1878" y="244" fontSize="13" fill="#ff7a7a">X</text>
      <text transform="translate(1829 209) rotate(4)" fontSize="10" fontWeight="700" fill="#8f9498">FRONT</text>
      <text transform="translate(1872 214) rotate(-50)" fontSize="7" fontWeight="700" fill="#8f9498">RIGHT</text>
    </g>
  </g>
);

const Model = () => (
  <Scene viewBox="0 137 1920 853" preserveAspectRatio="xMidYMid slice" role="img" aria-label="Massironi Shelf model">
    <defs>
      {ribs.map((r, i) => (
        <React.Fragment key={i}>
          <linearGradient id={`rib${i}`} x1="0" y1="0" x2="1" y2="0.1"><stop offset="0.3" stopColor={r.from} /><stop offset="1" stopColor={r.to} /></linearGradient>
          <linearGradient id={`front${i}`} x1="0" y1="0" x2="0" y2="1"><stop offset="0.2" stopColor={r.front} /><stop offset="0.55" stopColor="#7c776d" /><stop offset="0.8" stopColor="#4b4842" /></linearGradient>
        </React.Fragment>
      ))}
      {shelves.map((s, i) => (
        <linearGradient key={i} id={`shelf${i}`} x1="0" y1="1" x2="0.25" y2="0"><stop offset="0.1" stopColor={s.glow} /><stop offset="1" stopColor={s.deep} /></linearGradient>
      ))}
      <radialGradient id="cubeShadow"><stop offset=".5" stopColor="#bdbdbd" /><stop offset="1" stopColor="#fff" stopOpacity="0" /></radialGradient>
    </defs>
    <path d="M594 882C604 904 650 935 727 953Q732 947 745 950L842 967C920 984 1010 986 1080 985C1170 983 1220 978 1272 970Z" fill="#cbcbcb" />
    <Ground />
    {shelves.map((s, n) => !s.open && <ShelfPiece key={n} s={s} n={n} />)}
    {ribs.map((r, i) => (
      <g key={i}>
        <RibShape rib={r} i={i} />
        {shelves.map((s, n) => s.cuts[i] && <ShelfPiece key={n} s={s} n={n} cut={s.cuts[i]} />)}
      </g>
    ))}
    {shelves.map((s, n) => (
      <path key={n} d={`M${at(s.upper[0])}${curve(s.upper)}L${at(s.lower[s.lower.length - 1])}${curve(rev(s.lower))}Z`} fill={s.front} stroke="#0b0b0b" strokeWidth="1" />
    ))}
    <path d="M720 573L771 551M828 593L937 543M828 600L937 550" stroke="#0b0b0b" strokeWidth="1.200" />
    <path d="M633 685L823 597" stroke="#2a9a2a" strokeWidth="1.200" />
    <g fill="none" stroke="#9a80d0" strokeWidth="1.200">
      {ribs.filter((r) => r.sketched).map((r, i) => <path key={i} d={`M${at(r.edge[0])}${curve(r.edge)}`} />)}
      {shelves.filter((s) => s.sketched).map((s, i) => <path key={i} d={`M${at(s.lower[0])}${curve(s.lower)}`} />)}
      <path d="M937 168V924M1046 203V918M1123 255V887M1200 341V821" />
      <path d="M760 197L1107 242M622 344L1245 425M589 505L814 534L721 581" />
      <path d="M844 420L890 399M828 593L883 568M828 600L883 575M843 750L890 729M901 889L919 881M905 228L919 221" />
      <path opacity=".7" d="M738 360L705 374M744 360L711 374M814 369L773 389M821 370L779 389M931 385L884 406M937 385L890 406M1052 400L1010 420M1046 399L964 438M1130 410L1096 424M1123 409L1058 439M1206 419L1168 433M738 524L698 543M744 525L703 543M661 515L636 527M668 515L642 527M947 603L996 580M947 610L996 587M1040 605L1082 586M1040 612L1082 593M1146 601L1173 590M1146 608L1173 597M845 757L890 737M963 760L1004 741M964 767L1004 749M1058 762L1090 747M1060 768L1090 754M1168 757L1184 749" />
      <g stroke="#a77fe0" strokeWidth="2"><circle cx="1033" cy="174" r="4.500" /><circle cx="1033" cy="339" r="4.500" opacity=".6" /><circle cx="1033" cy="503" r="4.500" opacity=".6" /></g>
    </g>
    <g fill="#8a68c0" fillOpacity=".3" stroke="#7257a3" strokeWidth="1.300" opacity=".8">
      {faint.map(([x, y], i) => <circle key={i} cx={x} cy={y} r="3.500" />)}
    </g>
    {solid.map(([x, y], i) => (
      <g key={i}><circle cx={x} cy={y} r="4" fill="#8a68c0" stroke="#4b3a70" /><circle cx={x} cy={y} r="1.500" fill="#0b0612" /></g>
    ))}
    <ViewCube />
    <circle cx="520" cy="851" r="47" fill="#fdf935" />
    <path d="M520 850V867L524 863L527 870L530 869L527 862H533Z" fill="#fff" stroke="#000" strokeWidth="1" />
  </Scene>
);

/* ================= screen data ================= */
const groups = [
  { name: "CREATE", w: 307, tools: ["sketch", "extrude", "revolve", "hole", "pattern", "form", "derive"] },
  { name: "MODIFY", w: 269, tools: ["presspull", "fillet", "shell", "combine", "split", "move"] },
  { name: "ASSEMBLE", w: 97, tools: ["component", "joint"] },
  { name: "CONSTRUCT", w: 99, tools: ["plane"] },
  { name: "INSPECT", w: 79, tools: ["measure"] },
  { name: "INSERT", w: 69, tools: ["image"] },
  { name: "SELECT", w: 77, tools: ["select"] },
];
const bodies = [1, 2, 6, 4, 23, 8, 9, 10, 15, 16, 17, 18, 19, 20, 21, 22];
const k = { s: "tlsketch", r: "revolve", e: "extrude", m: "mirror", j: "rigid", p: "plane" } as Record<string, string>;
const features = "srsemmmjsesesemsemsesesesesssssss".split("").concat(["p", "s", "e"]);
const firstSuppressed = features.length - 3;

const playShapes: [string, string][] = [
  ["Go to start", "M1 1h2v14H1zM14 1v14L4 8z"],
  ["Step back", "M11 1v14L1 8zM12 5h2v6h-2z"],
  ["Play", "M2 0l12 8-12 8z"],
  ["Step forward", "M2 5h2v6H2zM5 1v14l10-7z"],
  ["Go to end", "M2 1v14l10-7zM13 1h2v14h-2z"],
];

const navItems: { name: string; w: number; gap?: number; caret?: boolean; icon: React.ReactNode }[] = [
  { name: "Orbit", w: 34, gap: 5, caret: true, icon: <g fill="none" stroke="#222" strokeWidth="1.200"><path d="M7 3v12h2V3M6 4l2-3 2 3" /><path d="M10 6c7 1 6 6-4 6H2M1 8c-1-1 1-2 4-2M5 9l-3 3 3 3" /></g> },
  { name: "Look at", w: 26, icon: <g fill="#fff" stroke="#333"><path d="M1.500 6h13v9h-13z" /><path d="M4 9h8v3H4z" fill="#999" /><path d="M2 5l5-4-1 3 6-3-1 4" fill="none" /></g> },
  { name: "Pan", w: 25, icon: <path d="M5 15L1 9c1-1 2-1 4 1L3 3c1-1 2 0 3 4V1c1-1 2-1 2 0v6l2-5c1 0 2 0 1 2l-1 5 3-4c1 0 2 1 1 2l-3 8z" fill="#fff" stroke="#333" /> },
  { name: "Zoom", w: 27, icon: <g fill="none" stroke="#333"><circle cx="6" cy="7" r="4.500" fill="#e7eef5" /><path d="M9 10l4 5" strokeWidth="2.500" /><path d="M11 3h5M13.500 1v4M11 7h5" /></g> },
  { name: "Fit", w: 33, gap: 5, caret: true, icon: <g fill="none" stroke="#333"><path d="M1 1h14v14H1z" strokeDasharray="2 2" /><circle cx="8" cy="7" r="5.500" fill="#dce8f0" /><path d="M12 11l3 4" strokeWidth="2.500" /></g> },
  { name: "Display settings", w: 31, caret: true, icon: <g stroke="#444"><path d="M1 1.500h14v10H1z" fill="#eee" /><path d="M3 3.500h10v6H3z" fill="#8fb2e0" /><path d="M5 15h6M8 12v3" /></g> },
  { name: "Grid and snaps", w: 30, caret: true, icon: <path d="M1 1h14v14H1zM1 4.500h14M1 8h14M1 11.500h14M4.500 1v14M8 1v14M11.500 1v14" fill="#fff" stroke="#555" /> },
  { name: "Viewports", w: 28, caret: true, icon: <g fill="#9ec0ea" stroke="#33507a"><path d="M1 2h6v5H1zM9 2h6v5H9zM1 9h6v5H1zM9 9h6v5H9z" /></g> },
];

const Win = ({ children }: { children: React.ReactNode }) => <svg width="28" height="28" viewBox="0 0 28 28">{children}</svg>;
const FusionMark = ({ size }: { size: number }) => (
  <svg width={size} height={size} viewBox="0 0 24 24"><path d="M0 0h24v24H0z" fill="#fbe6d6" /><path d="M7 3h12l-2 4h-5v3h5l-1 4h-4v7H7z" fill="#d8853a" /><path d="M7 3l3 3v13l-3 2z" fill="#8c4a14" /><path d="M15 19h6v2h-6z" fill="#e8a878" /></svg>
);
const systemKeys: [string, React.ReactNode][] = [
  ["Start", <path d="M6 8l7-1v7H6zM14 7l8-1v8h-8zM6 15h7v7l-7-1zM14 15h8v8l-8-1z" fill="#fff" />],
  ["Search", <g fill="none" stroke="#fff" strokeWidth="1.500"><circle cx="16" cy="11" r="5.500" /><path d="M12 15l-7 7" /></g>],
  ["Cortana", <circle cx="14" cy="14" r="7" fill="none" stroke="#fff" strokeWidth="2" />],
  ["Task view", <g fill="none" stroke="#fff" strokeWidth="1.200"><path d="M7 7v2h10V7M7 11h10v7H7zM7 22v-2h10v2M21 7v15" /><path d="M20 11h2v3h-2z" fill="#fff" /></g>],
];
const apps: [string, "open" | "active" | undefined, React.ReactNode][] = [
  ["File Explorer", undefined, <Win><path d="M3 4h8l2 2h12v18H3z" fill="#e8b028" /><path d="M3 8h22v16H3z" fill="#ffd45c" /><path d="M7 24V15h14v9h-4v-4h-6v4z" fill="#3a8ee0" /></Win>],
  ["Word", undefined, <Win><path d="M9 3h16v22H9z" fill="#2b7cd3" /><path d="M9 3h16v6H9z" fill="#41a5ee" /><path d="M9 19h16v6H9z" fill="#103f91" /><path d="M2 8h12v12H2z" fill="#185abd" /><text x="3" y="18" fontSize="10" fontWeight="700" fill="#fff" fontFamily={ui}>W</text></Win>],
  ["Excel", undefined, <Win><path d="M9 3h16v22H9z" fill="#21a366" /><path d="M17 3h8v6h-8z" fill="#33c481" /><path d="M9 14h16v11H9z" fill="#107c41" /><path d="M17 19h8v6h-8z" fill="#185c37" /><path d="M2 8h12v12H2z" fill="#107c41" /><text x="4" y="18" fontSize="11" fontWeight="700" fill="#fff" fontFamily={ui}>X</text></Win>],
  ["Brave", "open", <Win><path d="M9 3h10l2 3h3l1 4-2 9-9 7-9-7-2-9 1-4h3z" fill="#fb4a1d" /><path d="M14 7l5 1 3 3-3 5 1 2-4 1 1 2-3 2-3-2 1-2-4-1 1-2-3-5 3-3z" fill="#fff" /><path d="M9 12l4 1-1 3zM19 12l-4 1 1 3zM12 18h4l-2 2z" fill="#fb4a1d" /></Win>],
  ["Mail", undefined, <Win><path d="M2 12L14 3l12 9v13H2z" fill="#0d68b8" /><path d="M4 12h20l-10 9z" fill="#fff" /><path d="M2 12l12 9 12-9v13H2z" fill="#28a8ea" /><path d="M14 21l12-9v13H2z" fill="#50d0ff" opacity=".6" /></Win>],
  ["Snipping tool", undefined, <Win><path d="M9 3c14-1 15 12 6 16" fill="none" stroke="#c8401c" strokeWidth="4" /><path d="M14 4l2 14M9 6l6 13" stroke="#d8dde2" strokeWidth="3" /><g fill="none" stroke="#2b8fd8" strokeWidth="2"><circle cx="9" cy="20" r="3" /><circle cx="17" cy="23" r="3" /></g></Win>],
  ["Camtasia", "open", <Win><rect x="2" y="2" width="24" height="24" rx="2" fill="#f8514a" /><path d="M21 6H11L7 10v8l4 4h10v-4h-8l-2-2v-4l2-2h8z" fill="#fff" /></Win>],
  ["Fusion 360", "active", <FusionMark size={24} />],
  ["Chrome", "open", <Win><circle cx="14" cy="14" r="11" fill="#fdc935" /><path d="M14 14L4.500 8.500A11 11 0 0 1 23.500 8.500H14z" fill="#e33b2e" /><path d="M14 14L4.500 8.500A11 11 0 0 0 13 25l5-8z" fill="#2ea44f" /><circle cx="14" cy="14" r="5.300" fill="#fff" /><circle cx="14" cy="14" r="4.200" fill="#4285f4" /></Win>],
];

const Icon16 = ({ children }: { children: React.ReactNode }) => <svg width="16" height="16" viewBox="0 0 16 16">{children}</svg>;

export default function App() {
  return (
    <Page>
      <GlobalStyle />
      <TitleBar>
        <FusionMark size={15} />
        <TitleText>Autodesk Fusion 360 (Personal - Not for Commercial Use)</TitleText>
        <WindowButton aria-label="Minimize"><svg width="10" height="10"><path d="M0 5.500h10" stroke="#000" /></svg></WindowButton>
        <WindowButton aria-label="Restore"><svg width="10" height="10"><path d="M.5 2.500h7v7h-7zM2.500 2V.5h7v7H8" fill="none" stroke="#000" /></svg></WindowButton>
        <WindowButton aria-label="Close"><svg width="11" height="11"><path d="M.5.5l10 10M10.500.5l-10 10" stroke="#000" /></svg></WindowButton>
      </TitleBar>

      <AppBar>
        <QuickAccess>
          <QuickButton $w={20} aria-label="Data panel"><svg width="14" height="14"><path d="M0 0h4v4H0zM5 0h4v4H5zM10 0h4v4h-4zM0 5h4v4H0zM5 5h4v4H5zM10 5h4v4h-4zM0 10h4v4H0zM5 10h4v4H5zM10 10h4v4h-4z" fill="#666" /></svg></QuickButton>
          <QuickButton $w={56} aria-label="File"><svg width="14" height="16"><path d="M0 0h8v6h6v10H0zM9 0l5 5H9z" fill="#666" /></svg><Caret c="#555" /></QuickButton>
          <QuickButton $w={24} aria-label="Save"><svg width="14" height="14"><path d="M0 0h14v14H0z" fill="#666" /><path d="M3 1h8v5H3zM3 9h8v5H3z" fill="#cbcbcb" /><path d="M5 10h3v4H5z" fill="#666" /></svg></QuickButton>
          <QuickButton $w={54} aria-label="Undo"><svg width="14" height="13"><path d="M13 13c1-6-3-8-9-8M6 0L1 5l5 5" fill="none" stroke="#666" strokeWidth="2" /></svg><Caret c="#555" /></QuickButton>
          <QuickButton $w={26} $faded aria-label="Redo"><svg width="14" height="13"><path d="M1 13c-1-6 3-8 9-8M8 0l5 5-5 5" fill="none" stroke="#666" strokeWidth="2" /></svg><Caret c="#555" /></QuickButton>
        </QuickAccess>
        <DocumentTab>
          <DocumentName>
            <svg width="17" height="16" viewBox="0 0 17 16"><path d="M0 2l8-2 8 2-1 10-6 4-8-4z" fill="#666" /><path d="M1 4l8 1v10l-8-4z" fill="#aaa" /></svg>
            Massironi Shelf v9*
          </DocumentName>
          <SmallButton aria-label="Close document"><svg width="9" height="9"><path d="M.5.5l8 8M8.500.5l-8 8" stroke="#666" strokeWidth="1.300" /></svg></SmallButton>
        </DocumentTab>
        <NewTab aria-label="New document"><svg width="14" height="14"><path d="M7 1v12M1 7h12" stroke="#777" strokeWidth="3" /></svg></NewTab>
        <StatusArea>
          <StatusButton aria-label="Comments"><Icon16><path d="M0 1h16v11h-2v4l-4-4H0z" fill="#5c5c5c" /><path d="M2 4h12M2 7h12" stroke="#cbcbcb" strokeWidth="1.300" /></Icon16></StatusButton>
          <StatusButton $gap={2}><Icon16><path d="M0 0h7v5h4v3l-6 8H0zM8 0l4 4H8z" fill="#5c5c5c" /><path d="M7 15l1-4 5-5 3 3-5 5z" fill="#5c5c5c" stroke="#cbcbcb" /></Icon16>2 of 10</StatusButton>
          <StatusButton><Icon16><circle cx="8" cy="8" r="7" fill="none" stroke="#5c5c5c" strokeWidth="1.500" /><circle cx="8" cy="8" r="5" fill="#5c5c5c" /><path d="M8 4v4h4" stroke="#cbcbcb" strokeWidth="1.500" fill="none" /></Icon16>1</StatusButton>
          <StatusButton aria-label="Notifications"><Icon16><path d="M1 12c3-2 1-10 6-11 6 0 4 9 7 11zM6 14h4l-2 2z" fill="#5c5c5c" /><circle cx="12" cy="4" r="3.500" fill="#0696e0" /></Icon16></StatusButton>
          <StatusButton aria-label="Help"><Icon16><circle cx="8" cy="8" r="8" fill="#5c5c5c" /><path d="M5.500 6c0-4 5.500-3 5 0 0 2-2.500 2-2.500 4M8 11.500v2" stroke="#cbcbcb" strokeWidth="1.800" fill="none" /></Icon16></StatusButton>
          <Avatar aria-label="Account">CF</Avatar>
        </StatusArea>
      </AppBar>

      <Ribbon>
        <Workspace>DESIGN <Caret /></Workspace>
        <RibbonBody>
          <TabStrip>
            <RibbonTab $active>SOLID</RibbonTab>
            <RibbonTab>SURFACE</RibbonTab>
            <RibbonTab>SHEET METAL</RibbonTab>
            <RibbonTab>TOOLS</RibbonTab>
          </TabStrip>
          <GroupRow>
            {groups.map((g) => (
              <Group key={g.name} $w={g.w}>
                <Tools>
                  {g.tools.map((t) => <Tool key={t} $selected={t === "select"} aria-label={t}><ToolIcon name={t} size={t === "measure" || t === "image" ? 30 : 32} /></Tool>)}
                </Tools>
                <GroupLabel>{g.name} <Caret /></GroupLabel>
              </Group>
            ))}
          </GroupRow>
        </RibbonBody>
      </Ribbon>

      <Canvas>
        <Model />
        <BrowserPanel>
          <PanelBar $open>
            <svg width="10" height="6"><path d="M5 0v6L0 3zM10 0v6L5 3z" fill="#222" /></svg>
            <PanelTitle>BROWSER</PanelTitle>
            <SmallButton aria-label="Collapse browser"><RoundSign /></SmallButton>
            <Grip />
          </PanelBar>
          <Tree>
            <TreeRow $depth={0}>
              <Twisty aria-label="Collapse"><Arrow open /></Twisty>
              <RootCard>
                <button aria-label="Toggle visibility"><Eye /></button>
                <RootName><CubeIcon />Massironi Shelf v9</RootName>
                <RootRadio type="radio" defaultChecked aria-label="Activate component" />
              </RootCard>
            </TreeRow>
            <TreeRow $depth={1}><Twisty aria-label="Expand"><Arrow /></Twisty><RowCard><Gear /><RowName>Document Settings</RowName></RowCard></TreeRow>
            <TreeRow $depth={1}><Twisty aria-label="Expand"><Arrow /></Twisty><RowCard><Folder /><RowName>Named Views</RowName></RowCard></TreeRow>
            <TreeRow $depth={1}><Twisty aria-label="Expand"><Arrow /></Twisty><RowCard><button aria-label="Show"><Eye off /></button><Folder /><RowName>Origin</RowName></RowCard></TreeRow>
            <TreeRow $depth={1}><Twisty aria-label="Collapse"><Arrow open /></Twisty><RowCard><button aria-label="Hide"><Eye /></button><Folder /><RowName>Bodies</RowName></RowCard></TreeRow>
            {bodies.map((b) => (
              <TreeRow key={b} $depth={2}><TwistySpace /><RowCard><button aria-label="Hide"><Eye /></button><BodyIcon /><RowName>{`Body${b}`}</RowName></RowCard></TreeRow>
            ))}
            <TreeRow $depth={1}><Twisty aria-label="Expand"><Arrow /></Twisty><RowCard><button aria-label="Hide"><Eye /></button><Folder /><RowName>Sketches</RowName></RowCard></TreeRow>
          </Tree>
        </BrowserPanel>
        <CommentsPanel>
          <PanelBar>
            <svg width="10" height="6" />
            <PanelTitle>COMMENTS</PanelTitle>
            <SmallButton aria-label="Add comment"><RoundSign plus /></SmallButton>
            <Grip />
          </PanelBar>
        </CommentsPanel>
        <NavBar>
          {navItems.map((n) => (
            <NavButton key={n.name} $w={n.w} $gap={n.gap} aria-label={n.name}><Icon16>{n.icon}</Icon16>{n.caret && <Caret />}</NavButton>
          ))}
        </NavBar>
      </Canvas>

      <Timeline>
        <PlayControls>
          {playShapes.map(([name, d]) => (
            <PlayButton key={name} aria-label={name}><Icon16><path d={d} fill="#444" /></Icon16></PlayButton>
          ))}
        </PlayControls>
        <Features>
          {features.map((f, i) => (
            <Feature key={i} $faded={i >= firstSuppressed} $edge={i === 0 ? "first" : i === features.length - 1 ? "last" : undefined}>
              {i === firstSuppressed && <Marker><svg width="12" height="33"><path d="M0 0h12v5L7 10v23H5V10L0 5z" fill="#5e5e5e" /></svg></Marker>}
              <button aria-label={k[f]}><ToolIcon name={k[f]} size={16} /></button>
            </Feature>
          ))}
        </Features>
        <SettingsButton aria-label="Timeline settings"><Gear /></SettingsButton>
      </Timeline>

      <Taskbar>
        <SystemKeys>
          {systemKeys.map(([name, art]) => <TaskButton key={name} $w={48} aria-label={name}><Win>{art}</Win></TaskButton>)}
        </SystemKeys>
        {apps.map(([name, state, art]) => <TaskButton key={name} $w={49} $state={state} aria-label={name}>{art}</TaskButton>)}
        <Tray>
          <svg width="16" height="18" viewBox="0 0 16 18" fill="none" stroke="#fff" strokeWidth="1.200"><path d="M6 11l6-9c1-2 4 0 3 2l-6 9-4 3zM6 8c-4 0-6 3-5 6s5 3 7 1" /></svg>
          <Clock>9:15 PM<br />7/5/2021</Clock>
        </Tray>
      </Taskbar>
    </Page>
  );
}
